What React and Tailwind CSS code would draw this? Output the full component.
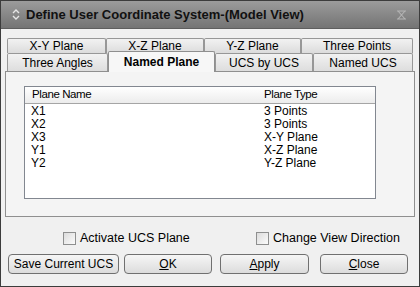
import React from 'react';

const font = { fontFamily: '"Liberation Sans", Arial, sans-serif' };

const rowOne = [
    { label: 'X-Y Plane', w: 'w-[99px]' },
    { label: 'X-Z Plane', w: 'w-[98px]' },
    { label: 'Y-Z Plane', w: 'w-[97px]' },
    { label: 'Three Points', w: 'w-[112px]' },
];

const rowTwo = [
    { label: 'Three Angles', w: 'w-[101px]' },
    { label: 'Named Plane', w: 'w-[107px]', active: true },
    { label: 'UCS by UCS', w: 'w-[98px]' },
    { label: 'Named UCS', w: 'w-[100px]' },
];

const planes = [
    { name: 'X1', type: '3 Points' },
    { name: 'X2', type: '3 Points' },
    { name: 'X3', type: 'X-Y Plane' },
    { name: 'Y1', type: 'X-Z Plane' },
    { name: 'Y2', type: 'Y-Z Plane' },
];

const Tab = ({ label, w, active }) => {
    if (active) {
        return (
            <div className={`${w} relative z-10 -mt-[2px] h-[21px] flex items-center justify-center bg-[#f7f7f7] border border-b-0 border-[#8f8f8f] rounded-t-[2px] text-[12px] font-bold text-black`}>
                {label}
            </div>
        );
    }
    return (
        <div className={`${w} h-full flex items-center justify-center bg-gradient-to-b from-[#f2f2f2] to-[#dcdcdc] border border-b-0 border-[#979797] rounded-t-[2px] text-[12px] text-black`}>
            {label}
        </div>
    );
};

const Checkbox = ({ label }) => (
    <div className="flex items-center gap-[4px] h-[16px]">
        <div className="w-[13px] h-[13px] border border-[#8e8f8f] bg-gradient-to-br from-[#dcdcdc] to-[#fbfbfb]" />
        <span className="text-[12.5px] leading-[16px] text-black">{label}</span>
    </div>
);

const Button = ({ children, w, className = '' }) => (
    <button className={`${w} ${className} h-[20px] flex items-center justify-center rounded-[4px] border border-[#707070] bg-gradient-to-b from-[#f6f6f6] to-[#dcdcdc] text-[12px] text-black`}>
        {children}
    </button>
);

export default function App() {
    return (
        <div style={font} className="w-[420px] h-[287px] flex flex-col bg-[#f0f0f0] border border-[#3c3c3c] overflow-hidden select-none">
            {/* Title bar */}
            <div className="h-[28px] shrink-0 flex items-center bg-gradient-to-b from-[#9c9c9c] to-[#747474] border-b border-[#5e5e5e]">
                <svg width="8" height="11" viewBox="0 0 8 11" className="ml-[11px]">
                    <path d="M1 4 L4 1 L7 4" stroke="#e6e6e6" strokeWidth="1.4" fill="none" />
                    <path d="M1 7 L4 10 L7 7" stroke="#e6e6e6" strokeWidth="1.4" fill="none" />
                </svg>
                <span className="ml-[6px] text-[13px] font-bold text-[#111]">Define User Coordinate System-(Model View)</span>
                <svg width="11" height="10" viewBox="0 0 11 10" className="ml-auto mr-[12px]">
                    <path d="M1 1 H10 M1 9 H10 M2 1 L9 9 M9 1 L2 9" stroke="#b4b4b4" strokeWidth="1.1" fill="none" />
                </svg>
            </div>

            <div className="flex flex-col px-[4px] pt-[9px]">
                {/* Tabs */}
                <div className="px-[2px]">
                    <div className="flex h-[15px]">
                        {rowOne.map(t => <Tab key={t.label} {...t} />)}
                    </div>
                    <div className="flex h-[19px] items-end">
                        {rowTwo.map(t => <Tab key={t.label} {...t} />)}
                    </div>
                </div>

                {/* Tab panel */}
                <div className="-mt-px h-[146px] border border-[#8f8f8f] bg-[#f4f4f4] pl-[18px] pt-[14px]">
                    <div className="w-[352px] h-[113px] border border-[#828790] bg-white">
                        <div className="flex h-[17px] items-center bg-gradient-to-b from-[#ffffff] to-[#ececec] border-b border-[#a5a5a5] text-[11.5px] tracking-[-0.4px] text-black">
                            <div className="w-[231px] pl-[7px]">Plane Name</div>
                            <div className="pl-[8px]">Plane Type</div>
                        </div>
                        <div className="pt-px text-[12px] leading-[13px] text-black">
                            {planes.map(p => (
                                <div key={p.name} className="flex">
                                    <div className="w-[233px] pl-[6px]">{p.name}</div>
                                    <div className="pl-[6px]">{p.type}</div>
                                </div>
                            ))}
                        </div>
                    </div>
                </div>

                {/* Options */}
                <div className="flex mt-[13px] ml-[58px]">
                    <div className="w-[193px]"><Checkbox label="Activate UCS Plane" /></div>
                    <Checkbox label="Change View Direction" />
                </div>

                {/* Buttons */}
                <div className="flex mt-[8px] ml-[3px]">
                    <Button w="w-[111px]">Save Current UCS</Button>
                    <Button w="w-[88px]" className="ml-[5px]"><span><u>O</u>K</span></Button>
                    <Button w="w-[89px]" className="ml-[8px]"><span><u>A</u>pply</span></Button>
                    <Button w="w-[88px]" className="ml-[11px]"><span><u>C</u>lose</span></Button>
                </div>
            </div>
        </div>
    );
}
